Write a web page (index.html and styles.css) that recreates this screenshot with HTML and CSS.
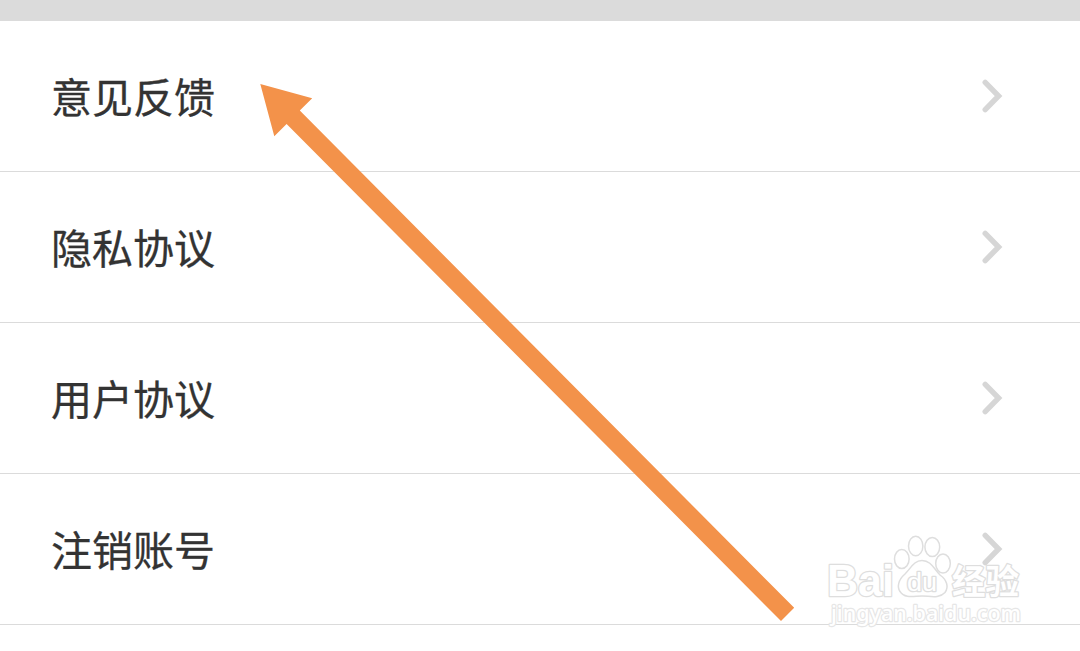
FILE: index.html
```html
<!DOCTYPE html>
<html lang="zh-CN">
<head>
<meta charset="utf-8">
<title>设置</title>
<link rel="stylesheet" href="styles.css">
</head>
<body>
<main class="screen">
  <div class="divider"></div>
  <ul class="menu">
    <li class="item"><span class="label">意见反馈</span><svg class="chevron" viewBox="0 0 24 36"><path d="M5.2 4.4 18.6 18 5.2 31.6"/></svg></li>
    <li class="item"><span class="label">隐私协议</span><svg class="chevron" viewBox="0 0 24 36"><path d="M5.2 4.4 18.6 18 5.2 31.6"/></svg></li>
    <li class="item"><span class="label">用户协议</span><svg class="chevron" viewBox="0 0 24 36"><path d="M5.2 4.4 18.6 18 5.2 31.6"/></svg></li>
    <li class="item"><span class="label">注销账号</span><svg class="chevron" viewBox="0 0 24 36"><path d="M5.2 4.4 18.6 18 5.2 31.6"/></svg></li>
  </ul>
  <svg class="arrow" viewBox="0 0 1080 651"><path d="M260.3 84 312.2 98.2 299.8 110.6 794.2 607.8 781 621 286.6 124 274.3 136.3Z"/></svg>
  <svg class="watermark" viewBox="820 525 220 110">
    <text class="brand" x="827" y="596" textLength="67" lengthAdjust="spacingAndGlyphs">Bai</text>
    <g class="paw">
      <ellipse cx="901.8" cy="559" rx="7.3" ry="9.5"/>
      <ellipse cx="915.7" cy="546" rx="7.2" ry="9.8"/>
      <ellipse cx="932.3" cy="547" rx="7.4" ry="9.6"/>
      <ellipse cx="943" cy="563.5" rx="7.3" ry="9.6"/>
      <path d="M922 560.5C914 560.5 911 568 905 574C898 580 897 587 900 591.5C905 599 914 596 922 596C930 596 939 599 945 592.5C949 587 947 580 940 575C934 569 931 560.5 922 560.5Z"/>
    </g>
    <text class="du" x="907" y="591" textLength="30" lengthAdjust="spacingAndGlyphs">du</text>
    <text class="brand-cn" x="952" y="594" textLength="67" lengthAdjust="spacingAndGlyphs">经验</text>
    <text class="site" x="831" y="621" textLength="190" lengthAdjust="spacingAndGlyphs">jingyan.baidu.com</text>
  </svg>
</main>
</body>
</html>
```
FILE: styles.css
```css
body {
  margin: 0;
  background: #fff;
}

.screen {
  position: relative;
  height: 651px;
  overflow: hidden;
}

.divider {
  height: 21px;
  background: #dbdbdb;
}

.menu {
  margin: 0;
  padding: 0;
  list-style: none;
}

.item {
  display: flex;
  align-items: center;
  justify-content: space-between;
  box-sizing: border-box;
  height: 151px;
  padding: 0 76px 0 51px;
  border-bottom: 1px solid #dbdbdb;
}

.label {
  padding-bottom: 2px;
  color: #333;
  font: 41px/60px "Noto Sans CJK SC", sans-serif;
  -webkit-text-stroke: 0.3px #333;
}

.chevron {
  width: 24px;
  height: 36px;
  fill: none;
  stroke: #d6d6d6;
  stroke-width: 5.4;
  stroke-linecap: round;
}

.arrow {
  position: absolute;
  top: 0;
  left: 0;
  width: 1080px;
  height: 651px;
  fill: #f3924a;
}

/* Translucent mark laid over the last row */
.watermark {
  position: absolute;
  top: 525px;
  left: 820px;
  width: 220px;
  height: 110px;
  fill: #fff;
  stroke: #dedede;
  stroke-width: 1.5;
}

.paw {
  fill: rgba(255, 255, 255, 0.8);
}

.brand,
.du,
.brand-cn,
.site {
  paint-order: stroke;
  stroke-linejoin: round;
}

.brand {
  font: bold 44px "Liberation Sans", sans-serif;
  stroke-width: 2.6;
}

.du {
  font: 25px "Liberation Sans", sans-serif;
  stroke-width: 2.6;
}

.brand-cn {
  font: bold 34px "Noto Sans CJK SC", sans-serif;
  stroke-width: 2.6;
}

.site {
  font: 500 22px "Noto Sans", sans-serif;
  stroke: #e6e6e6;
  stroke-width: 2.4;
}
```
